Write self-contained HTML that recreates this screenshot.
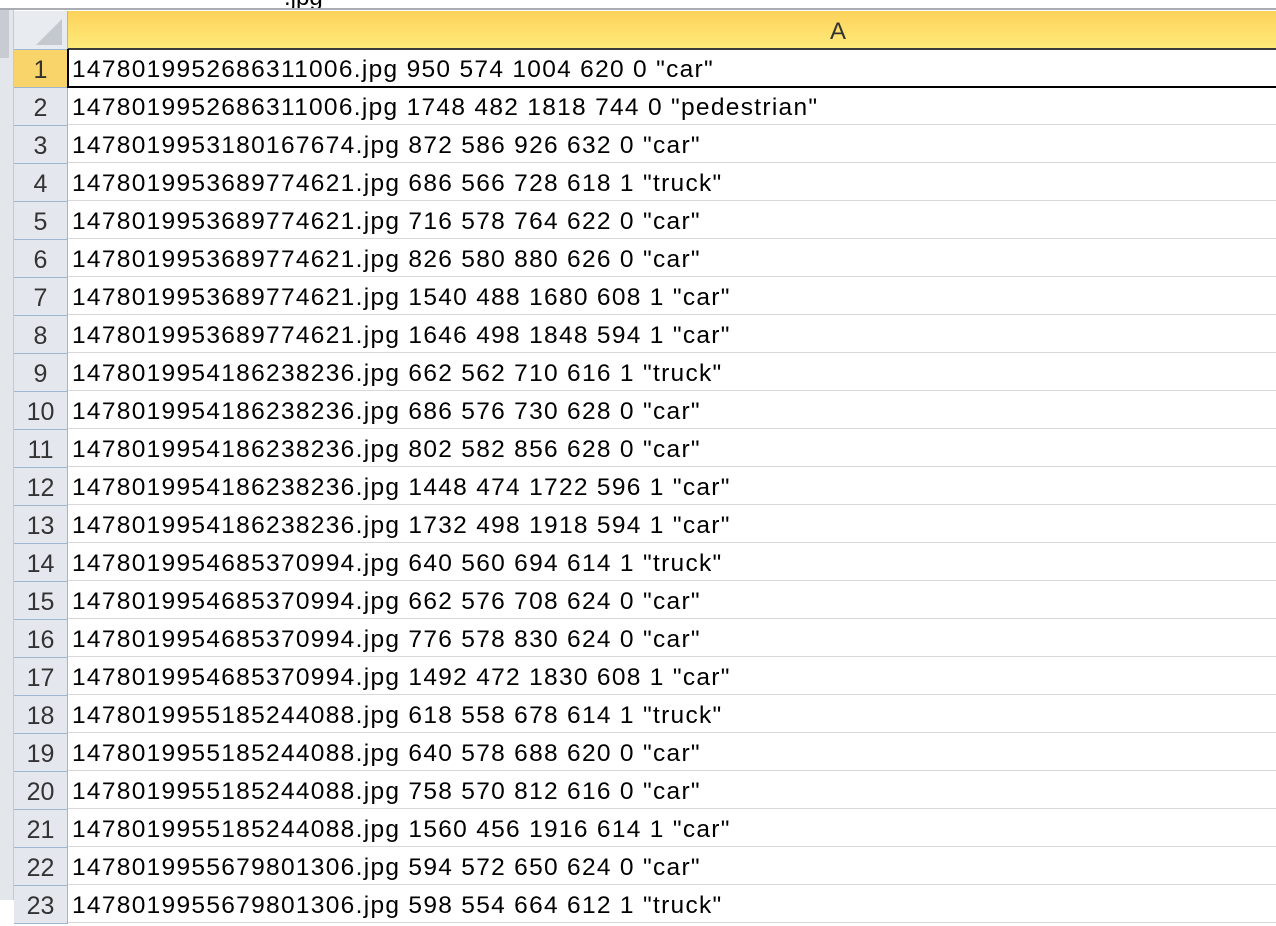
<!DOCTYPE html>
<html><head><style>
body{margin:0;width:1276px;height:900px;overflow:hidden;background:#fff;font-family:"Liberation Sans",sans-serif;position:relative}
.top{position:absolute;left:0;top:0;width:1276px;height:8px;background:#fff;border-bottom:2px solid #a9adb3;overflow:hidden}
.topt{position:absolute;left:284px;top:-16px;font-size:24px;color:#000}
.strip{position:absolute;left:0;top:10px;width:13px;height:890px;background:#e3e6eb;border-right:1px solid #c5cad2}
.sb{position:absolute;left:0;top:10px;width:9px;height:48px;background:#c8ccd2}
.corner{position:absolute;left:14px;top:11px;width:53px;height:38px;background:#e8ebef;border-right:1px solid #9eb6ce;border-bottom:1px solid #9eb6ce}
.hdr{position:absolute;left:68px;top:11px;width:1208px;height:37px;background:linear-gradient(#fdd25a,#ffea7a);border-bottom:2px solid #3b3b3b;font-size:24px;line-height:42px;color:#333}
.hdr span{position:absolute;left:762px}
.rh{position:absolute;left:14px;width:53px;height:37px;background:#e4e8ee;border-right:1px solid #9eb6ce;border-bottom:1px solid #9eb6ce;text-align:center;font-size:25px;line-height:40px;color:#333}
.row{position:absolute;left:68px;width:1208px;height:37px;border-bottom:1px solid #d8d8d8;font-size:24.5px;letter-spacing:1.3px;line-height:40px;padding-left:4px;color:#000;white-space:nowrap;overflow:hidden;box-sizing:border-box}
.sel{position:absolute;left:67px;top:49px;width:1220px;height:37px;border-left:2px solid #000;border-bottom:2px solid #000}
</style></head><body>
<div class="top"><span class="topt">.jpg</span></div>
<div class="strip"></div><div class="sb"></div>
<div class="corner"><svg width="53" height="38"><polygon points="48,8 48,34 22,34" fill="#c4c9cf"/></svg></div>
<div class="hdr"><span>A</span></div>
<div id="rows"></div>
<script>
var d=["1478019952686311006.jpg 950 574 1004 620 0 \"car\"",
"1478019952686311006.jpg 1748 482 1818 744 0 \"pedestrian\"",
"1478019953180167674.jpg 872 586 926 632 0 \"car\"",
"1478019953689774621.jpg 686 566 728 618 1 \"truck\"",
"1478019953689774621.jpg 716 578 764 622 0 \"car\"",
"1478019953689774621.jpg 826 580 880 626 0 \"car\"",
"1478019953689774621.jpg 1540 488 1680 608 1 \"car\"",
"1478019953689774621.jpg 1646 498 1848 594 1 \"car\"",
"1478019954186238236.jpg 662 562 710 616 1 \"truck\"",
"1478019954186238236.jpg 686 576 730 628 0 \"car\"",
"1478019954186238236.jpg 802 582 856 628 0 \"car\"",
"1478019954186238236.jpg 1448 474 1722 596 1 \"car\"",
"1478019954186238236.jpg 1732 498 1918 594 1 \"car\"",
"1478019954685370994.jpg 640 560 694 614 1 \"truck\"",
"1478019954685370994.jpg 662 576 708 624 0 \"car\"",
"1478019954685370994.jpg 776 578 830 624 0 \"car\"",
"1478019954685370994.jpg 1492 472 1830 608 1 \"car\"",
"1478019955185244088.jpg 618 558 678 614 1 \"truck\"",
"1478019955185244088.jpg 640 578 688 620 0 \"car\"",
"1478019955185244088.jpg 758 570 812 616 0 \"car\"",
"1478019955185244088.jpg 1560 456 1916 614 1 \"car\"",
"1478019955679801306.jpg 594 572 650 624 0 \"car\"",
"1478019955679801306.jpg 598 554 664 612 1 \"truck\""];
var h="";
for(var i=0;i<d.length;i++){var t=50+i*38;
h+='<div class="rh" style="top:'+t+'px;'+(i==0?'background:#f9d46a;':'')+'">'+(i+1)+'</div><div class="row" style="top:'+t+'px">'+d[i].replace(/"/g,'&quot;')+'</div>';}
document.getElementById("rows").innerHTML=h;
</script>
<div class="sel"></div>
</body></html>
